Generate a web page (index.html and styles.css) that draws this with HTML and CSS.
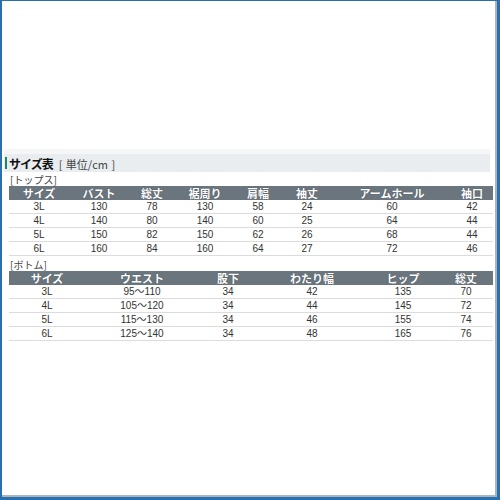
FILE: index.html
```html
<!DOCTYPE html>
<html lang="ja">
<head>
<meta charset="utf-8">
<link rel="stylesheet" href="styles.css">
</head>
<body>
<div class="frame">
  <div class="inner">
    <div class="heading">
      <span class="accent"></span>
      <span class="title">サイズ表</span>
      <span class="unit">[ 単位/cm ]</span>
    </div>

    <div class="label">[トップス]</div>
    <table class="sizes tops">
      <colgroup>
        <col style="width:60px"><col style="width:60px"><col style="width:46px"><col style="width:60px">
        <col style="width:46px"><col style="width:52px"><col style="width:118px"><col>
      </colgroup>
      <thead>
        <tr><th>サイズ</th><th>バスト</th><th>総丈</th><th>裾周り</th><th>肩幅</th><th>袖丈</th><th>アームホール</th><th>袖口</th></tr>
      </thead>
      <tbody>
        <tr><td>3L</td><td>130</td><td>78</td><td>130</td><td>58</td><td>24</td><td>60</td><td>42</td></tr>
        <tr><td>4L</td><td>140</td><td>80</td><td>140</td><td>60</td><td>25</td><td>64</td><td>44</td></tr>
        <tr><td>5L</td><td>150</td><td>82</td><td>150</td><td>62</td><td>26</td><td>68</td><td>44</td></tr>
        <tr><td>6L</td><td>160</td><td>84</td><td>160</td><td>64</td><td>27</td><td>72</td><td>46</td></tr>
      </tbody>
    </table>

    <div class="label label-bottom">[ボトム]</div>
    <table class="sizes bottoms">
      <colgroup>
        <col style="width:76px"><col style="width:114px"><col style="width:58px"><col style="width:110px">
        <col style="width:72px"><col>
      </colgroup>
      <thead>
        <tr><th>サイズ</th><th>ウエスト</th><th>股下</th><th>わたり幅</th><th>ヒップ</th><th>総丈</th></tr>
      </thead>
      <tbody>
        <tr><td>3L</td><td>95～110</td><td>34</td><td>42</td><td>135</td><td>70</td></tr>
        <tr><td>4L</td><td>105～120</td><td>34</td><td>44</td><td>145</td><td>72</td></tr>
        <tr><td>5L</td><td>115～130</td><td>34</td><td>46</td><td>155</td><td>74</td></tr>
        <tr><td>6L</td><td>125～140</td><td>34</td><td>48</td><td>165</td><td>76</td></tr>
      </tbody>
    </table>
  </div>
</div>
</body>
</html>
```

FILE: styles.css
```css
html, body {
  margin: 0;
  padding: 0;
  background: #ffffff;
}

body {
  font-family: "Liberation Sans", "Noto Sans CJK JP", sans-serif;
  color: #333;
}

.frame {
  width: 500px;
  height: 500px;
  box-sizing: border-box;
  border-style: solid;
  border-color: #2a6fae;
  border-width: 1px 3px 3px 2px;
}

.inner {
  height: 100%;
  box-sizing: border-box;
  border-right: 2px solid #aab4bd;
  border-bottom: 2px solid #aab4bd;
  padding: 148px 0 0 2px;
}

.heading {
  display: flex;
  align-items: center;
  height: 18px;
  margin-top: 5px;
  width: 486px;
  background: #e9edf0;
  box-shadow: 0 -5px 0 #f4f6f7;
}

.accent {
  width: 2px;
  height: 12px;
  background: #178a6e;
  margin-left: 1px;
  margin-right: 2px;
}

.title {
  font-family: "Noto Sans CJK JP", sans-serif;
  font-weight: bold;
  font-size: 12px;
  color: #111;
  letter-spacing: -1px;
}

.unit {
  font-family: "Noto Sans CJK JP", sans-serif;
  font-size: 11px;
  color: #444;
  margin-left: 6px;
  margin-top: 2px;
  word-spacing: 1px;
}

.label {
  font-family: "Noto Sans CJK JP", sans-serif;
  font-size: 10px;
  color: #444;
  line-height: 13px;
  margin: 1px 0 0 6px;
  height: 13px;
}

.label-bottom {
  margin-top: 2px;
}

.sizes {
  border-collapse: collapse;
  table-layout: fixed;
  width: 484px;
  margin-left: 5px;
  font-size: 10px;
}

.sizes th {
  background: #6a757e;
  color: #fff;
  font-family: "Noto Sans CJK JP", sans-serif;
  font-weight: bold;
  font-size: 11px;
  height: 14px;
  line-height: 14px;
  padding: 0;
  text-align: center;
  text-shadow: 0 0 1px #3d464d;
}

.sizes td {
  height: 13px;
  line-height: 13px;
  padding: 0;
  text-align: center;
  color: #333;
  border-bottom: 1px solid #dcdcdc;
  white-space: nowrap;
}
```
